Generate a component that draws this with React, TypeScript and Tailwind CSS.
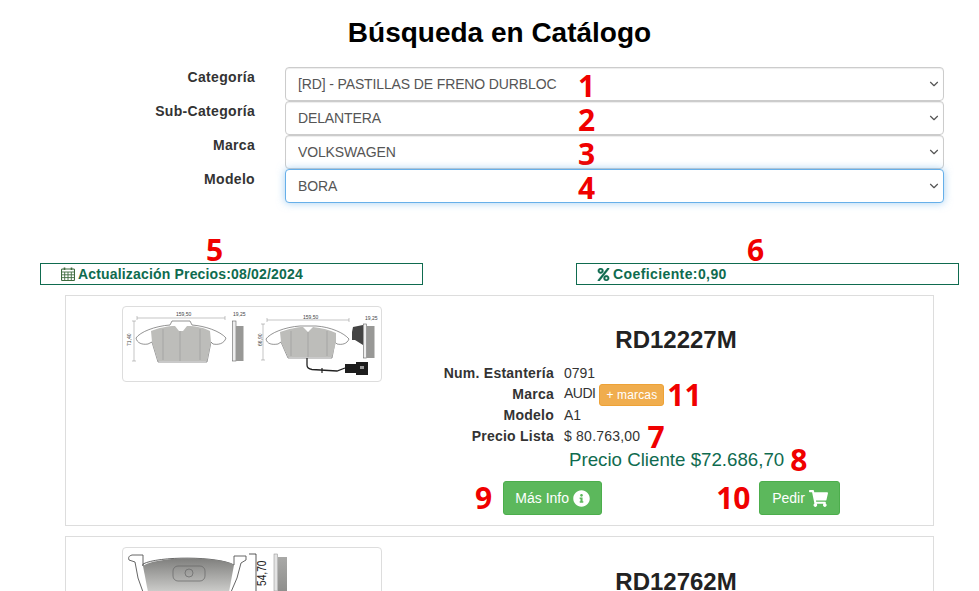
import React from 'react';
import { ChevronDown } from 'lucide-react';
import { FaInfoCircle, FaPercent, FaShoppingCart } from 'react-icons/fa';

type Field = { label: string; value: string; mark: string; focused?: boolean };

const fields: Field[] = [
  { label: 'Categoría', value: '[RD] - PASTILLAS DE FRENO DURBLOC', mark: '1' },
  { label: 'Sub-Categoría', value: 'DELANTERA', mark: '2' },
  { label: 'Marca', value: 'VOLKSWAGEN', mark: '3' },
  { label: 'Modelo', value: 'BORA', mark: '4', focused: true },
];

function Mark({ children, className = '' }: { children: React.ReactNode; className?: string }) {
  return (
    <span className={`font-['Open_Sans',sans-serif] text-[30px] leading-none font-bold text-[#f00000] ${className}`}>
      {children}
    </span>
  );
}

function CalendarIcon() {
  return (
    <svg viewBox="0 0 14 14" className="w-[14px] h-[14px] text-[#3f6b3f]" fill="none" stroke="currentColor" strokeWidth="1.1">
      <rect x="0.5" y="2" width="13" height="11.5" rx="1" />
      <path d="M0.5 5H13.5M0.5 7.8H13.5M0.5 10.6H13.5M3.7 5V13.5M7 5V13.5M10.3 5V13.5" strokeWidth="0.9" />
      <path d="M3.5 0.5V3M10.5 0.5V3" strokeWidth="1.6" />
    </svg>
  );
}

function Dim({ x, y, children, rotate }: { x: number; y: number; children: string; rotate?: boolean }) {
  return (
    <text
      x={0}
      y={0}
      fontSize="5"
      fill="#444"
      fontFamily="Liberation Sans"
      transform={`translate(${x} ${y})${rotate ? ' rotate(-90)' : ''}`}
    >
      {children}
    </text>
  );
}

function PadDiagram() {
  return (
    <svg viewBox="123 307 258 74" className="block w-[258px] h-[74px]">
      {/* pad without sensor */}
      <path d="M137 318H225M137 316V320M225 316V320M134 321V361M132 321H136M132 361H136" stroke="#888" strokeWidth="0.5" />
      <Dim x={176} y={316}>159,50</Dim>
      <Dim x={131} y={346} rotate>71,40</Dim>
      <Dim x={233} y={316}>19,25</Dim>
      <path
        d="M136 338C140 332 155 326 170 325L172 321H190L192 325C205 326 220 331 226 338C224 344 218 345 213 344L211 342L207 362H158L152 342L148 344C142 345 137 343 136 338Z"
        fill="#fff"
        stroke="#666"
        strokeWidth="0.7"
      />
      <path d="M151 331C158 328 168 326 175 326L179 331H183L187 326C196 326 205 328 210 331L211 342L207 361H158L152 342Z" fill="#bdbdba" />
      <path d="M163 329V360M180 331V361M200 329V360" stroke="#8f8f8d" strokeWidth="0.5" />
      <rect x="232.5" y="321" width="3.5" height="40" fill="#eee" stroke="#666" strokeWidth="0.6" />
      <rect x="236" y="326" width="7.5" height="35" fill="#989896" />

      {/* pad with sensor */}
      <path d="M267 320H349M267 318V322M349 318V322M263 324V360M261 324H265M261 360H265" stroke="#888" strokeWidth="0.5" />
      <Dim x={303} y={319}>159,50</Dim>
      <Dim x={262} y={346} rotate>66,90</Dim>
      <Dim x={365} y={320}>19,25</Dim>
      <path
        d="M266 339C270 333 285 327 300 326H316C331 327 344 333 349 339C347 344 342 345 337 344L335 342L332 358H288L281 342L278 344C272 345 267 344 266 339Z"
        fill="#fff"
        stroke="#666"
        strokeWidth="0.7"
      />
      <path d="M280 332C288 329 298 327 303 327L308 332L313 327C322 328 330 330 336 333L336 342L332 357H288L281 342Z" fill="#bdbdba" />
      <path d="M291 331V356M308 332V357M327 331V356" stroke="#8f8f8d" strokeWidth="0.5" />
      <path d="M307 358V365C307 368 309 369 312 369.5L337 371L345 368" fill="none" stroke="#222" strokeWidth="1.3" />
      <path d="M322 368V373" stroke="#222" strokeWidth="1.2" />
      <path d="M345 364H356V362H368V375H356V373H345Z" fill="#1d1d1d" />
      <rect x="360" y="366" width="4" height="3" fill="#999" />
      <path d="M353 327L363 325V345L355 340H352V332Z" fill="#444" />
      <rect x="363.5" y="324" width="3" height="34" fill="#eee" stroke="#666" strokeWidth="0.6" />
      <rect x="367" y="326" width="7.5" height="32" fill="#989896" />
    </svg>
  );
}

function SecondPad() {
  return (
    <svg viewBox="123 548 258 43" className="block w-[258px] h-[43px]">
      <defs>
        <linearGradient id="padFill" x1="0" y1="0" x2="0" y2="1">
          <stop offset="0" stopColor="#7f7f7d" />
          <stop offset="1" stopColor="#cdcdcb" />
        </linearGradient>
        <linearGradient id="sideFill" x1="0" y1="0" x2="0" y2="1">
          <stop offset="0" stopColor="#a9a9a7" />
          <stop offset="1" stopColor="#8f8f8d" />
        </linearGradient>
      </defs>
      <path
        d="M129 560C128 557 129 556 132 555H143V566L143 564C158 556 218 556 234 565V556H246V560L241 563L237 578L231 592H143L138 578L135 562Z"
        fill="#fff"
        stroke="#555"
        strokeWidth="0.9"
      />
      <path d="M143 566C158 556 218 556 234 565L229 592H148Z" fill="url(#padFill)" />
      <rect x="173" y="566" width="32" height="15" rx="5" fill="none" stroke="#666" strokeWidth="0.7" />
      <circle cx="189" cy="573" r="4" fill="none" stroke="#666" strokeWidth="0.7" />
      <path d="M249 554H256M256 554V591" stroke="#111" strokeWidth="0.7" />
      <text
        x="0"
        y="0"
        fontSize="12"
        fontFamily="Liberation Sans"
        fill="#222"
        transform="translate(265.5 586) rotate(-90) scale(0.85 1)"
      >
        54,70
      </text>
      <rect x="274" y="554" width="3.5" height="37" fill="#e4e4e4" stroke="#888" strokeWidth="0.5" />
      <rect x="278" y="557" width="9" height="34" fill="url(#sideFill)" />
    </svg>
  );
}

function InfoBox({
  mark,
  icon,
  text,
  markClass,
  textClass,
}: {
  mark: string;
  icon: React.ReactNode;
  text: string;
  markClass: string;
  textClass: string;
}) {
  return (
    <div className="w-[383px] flex flex-col">
      <div className={`h-[28px] text-center ${markClass}`}>
        <Mark>{mark}</Mark>
      </div>
      <div className="h-[22px] border border-[#0f6b4f] flex items-center gap-[3px] pl-[20px] text-[14px] font-bold text-[#0f6b4f]">
        {icon}
        <span className={textClass}>{text}</span>
      </div>
    </div>
  );
}

function Row({ label, className = 'h-[21px]', children }: { label: string; className?: string; children: React.ReactNode }) {
  return (
    <div className={`flex items-center ${className}`}>
      <div className="w-[135px] text-right font-bold text-[14px] tracking-[0.25px] text-[#333]">{label}</div>
      <div className="ml-[10px] flex items-center text-[14px] text-[#333] tracking-[-0.05px]">{children}</div>
    </div>
  );
}

export default function App() {
  return (
    <div className="h-[591px] overflow-hidden bg-white font-['Liberation_Sans',sans-serif] text-[14px] text-[#333]">
      <h1 className="pt-[16px] h-[67px] pl-[20px] text-center text-[28px] leading-[34px] font-bold text-black">Búsqueda en Catálogo</h1>

      <div className="flex flex-col">
        {fields.map((f) => (
          <div key={f.label} className="flex">
            <div className="w-[255px] text-right font-bold text-[14px] tracking-[0.32px] leading-[20px]">{f.label}</div>
            <div className="relative ml-[30px] w-[659px]">
              <select
                defaultValue={f.value}
                className={`block w-full h-[34px] pl-[12px] pr-[24px] appearance-none bg-white rounded-[4px] border text-[14px] tracking-[-0.13px] text-[#555] outline-none ${
                  f.focused
                    ? 'border-[#66afe9] shadow-[0_0_8px_rgba(102,175,233,0.6)]'
                    : 'border-[#ccc] shadow-[inset_0_1px_1px_rgba(0,0,0,0.075)]'
                }`}
              >
                <option value={f.value}>{f.value}</option>
              </select>
              <ChevronDown className="absolute right-[3px] top-[10px] w-[14px] h-[14px] text-[#555] pointer-events-none" strokeWidth={2} />
              <Mark className="absolute left-[293px] top-[4px]">{f.mark}</Mark>
            </div>
          </div>
        ))}
      </div>

      <div className="mt-[32px] ml-[40px] flex gap-[153px]">
        <InfoBox
          mark="5"
          icon={<CalendarIcon />}
          text="Actualización Precios:08/02/2024"
          markClass="pr-[34px]"
          textClass="tracking-[0.17px]"
        />
        <InfoBox
          mark="6"
          icon={<FaPercent className="w-[13px] h-[13px]" stroke="currentColor" strokeWidth={15} />}
          text="Coeficiente:0,90"
          markClass="pr-[24px]"
          textClass="tracking-[0.4px]"
        />
      </div>

      <div className="mx-[65px] w-[869px] mt-[10px] h-[231px] border border-[#ddd] flex">
        <div className="w-[353px] pl-[56px] pt-[10px]">
          <div className="w-[260px] h-[76px] border border-[#ddd] rounded-[4px] bg-white">
            <PadDiagram />
          </div>
        </div>
        <div className="flex-1 flex flex-col">
          <div className="pt-[30px] h-[66px] text-center text-[24px] leading-[28px] font-bold text-[#222]">RD12227M</div>
          <Row label="Num. Estantería" className="h-[22px]">0791</Row>
          <Row label="Marca">
            <span className="tracking-[-0.5px] -mt-[3px]">AUDI</span>
            <span className="ml-[4px] h-[22px] px-[6px] bg-[#f0ad4e] border border-[#eea236] rounded-[3px] text-white text-[12px] leading-[20px] tracking-[0.15px]">+ marcas</span>
            <Mark className="ml-[3px]">11</Mark>
          </Row>
          <Row label="Modelo">A1</Row>
          <Row label="Precio Lista">
            <span className="tracking-[0.22px]">$ 80.763,00</span>
            <Mark className="ml-[7px]">7</Mark>
          </Row>
          <div className="h-[24px] pl-[150px] mt-[1px] flex items-center text-[18.72px] text-[#0f6b4f]">
            Precio Cliente $72.686,70
            <Mark className="ml-[6px]">8</Mark>
          </div>
          <div className="mt-[9px] pl-[56px] flex items-center">
            <Mark>9</Mark>
            <button className="ml-[11px] w-[99px] h-[34px] flex items-center justify-center gap-[4px] bg-[#5cb85c] border border-[#4cae4c] rounded-[3px] text-white text-[14px]">
              Más Info <FaInfoCircle className="w-[17px] h-[17px]" />
            </button>
            <Mark className="ml-[114px]">10</Mark>
            <button className="ml-[9px] w-[81px] h-[34px] flex items-center justify-center gap-[4px] bg-[#5cb85c] border border-[#4cae4c] rounded-[3px] text-white text-[14px]">
              Pedir <FaShoppingCart className="w-[19px] h-[17px]" />
            </button>
          </div>
        </div>
      </div>

      <div className="mx-[65px] w-[869px] mt-[10px] h-[231px] border border-[#ddd] flex">
        <div className="w-[353px] pl-[56px] pt-[10px]">
          <div className="w-[260px] h-[76px] border border-[#ddd] rounded-[4px] bg-white">
            <SecondPad />
          </div>
        </div>
        <div className="flex-1 pt-[31px] text-center text-[24px] leading-[28px] font-bold text-[#222]">RD12762M</div>
      </div>
    </div>
  );
}
